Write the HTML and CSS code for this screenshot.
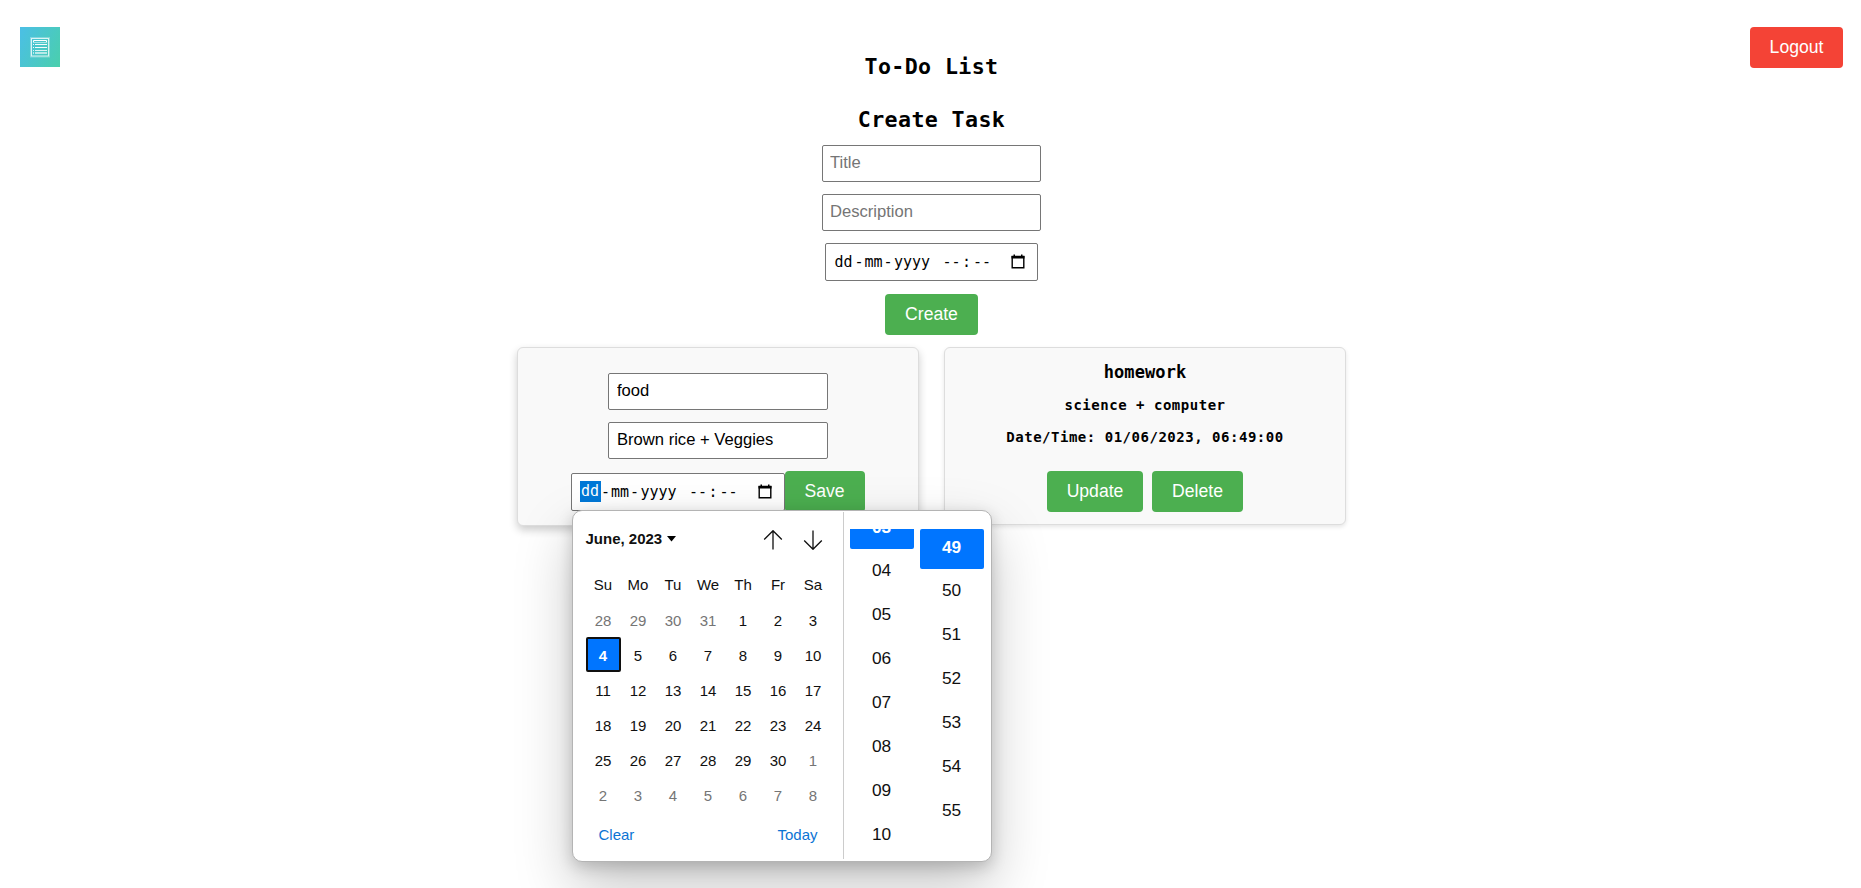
FILE: index.html
```html
<!DOCTYPE html>
<html lang="en">
<head>
<meta charset="utf-8">
<title>To-Do List</title>
<link rel="stylesheet" href="styles.css">
</head>
<body>
<header class="topbar">
  <div class="logo">
    <svg width="40" height="40" viewBox="0 0 40 40" fill="none">
      <rect x="11.5" y="11.5" width="17" height="17.5" stroke="#fff" stroke-opacity=".8"/>
      <rect x="10.5" y="10.5" width="19" height="19.5" stroke="#fff" stroke-opacity=".3"/>
      <path d="M13.5 15.5V13.5H26.5V15.5" stroke="#fff"/>
      <path d="M14 15.5H26" stroke="#fff" stroke-opacity=".5"/>
      <path d="M13 17.5H14M15 17.5H27M13 20.5H14M15 20.5H27" stroke="#fff" stroke-opacity=".95"/>
      <path d="M13 23.5H14M15 23.5H27" stroke="#fff" stroke-opacity=".8"/>
      <path d="M13 26H14M15 26H27" stroke="#fff" stroke-opacity=".6" stroke-width="2"/>
    </svg>
  </div>
  <button class="btn btn-logout">Logout</button>
</header>
<main class="page">
  <h2 class="heading">To-Do List</h2>
  <h2 class="heading">Create Task</h2>
  <form class="create">
    <input class="field" type="text" placeholder="Title">
    <input class="field" type="text" placeholder="Description">
    <div class="datetime">
      <span class="dd">dd</span><span class="sep">-</span><span class="mm">mm</span><span class="sep">-</span><span class="yyyy">yyyy</span><span class="hh">--</span><span class="colon">:</span><span class="mi">--</span>
      <svg class="cal-icon" width="14" height="15" viewBox="0 0 14 15"><path d="M1.200 2.500h11.600v11.300H1.200z" fill="none" stroke="#000" stroke-width="1.400"/><path d="M.5 2h13v2.500H.5zM2.500.4H4V3H2.500zM10 .4h1.500V3H10z"/></svg>
    </div>
    <button class="btn btn-create" type="button">Create</button>
  </form>
  <section class="tasks">
    <article class="card card-edit">
      <input class="field" type="text" value="food">
      <input class="field" type="text" value="Brown rice + Veggies">
      <div class="edit-row">
        <div class="datetime">
          <span class="dd selected">dd</span><span class="sep">-</span><span class="mm">mm</span><span class="sep">-</span><span class="yyyy">yyyy</span><span class="hh">--</span><span class="colon">:</span><span class="mi">--</span>
          <svg class="cal-icon" width="14" height="15" viewBox="0 0 14 15"><path d="M1.200 2.500h11.600v11.300H1.200z" fill="none" stroke="#000" stroke-width="1.400"/><path d="M.5 2h13v2.500H.5zM2.500.4H4V3H2.500zM10 .4h1.500V3H10z"/></svg>
        </div>
        <button class="btn btn-save">Save</button>
        <div class="picker">
          <div class="calendar">
            <div class="cal-head">
              <span class="month">June, 2023</span>
              <svg class="caret" width="9" height="6" viewBox="0 0 9 6"><path d="M0 0h9L4.500 5.500z"/></svg>
              <svg class="arrow" width="20" height="20" viewBox="0 0 20 20"><path d="M10 19.500V1M1.200 9.500L10 .7l8.800 8.800"/></svg>
              <svg class="arrow" width="20" height="20" viewBox="0 0 20 20"><path d="M10 .5V19M1.200 10.500L10 19.300l8.800-8.800"/></svg>
            </div>
            <div class="weekdays"><span>Su</span><span>Mo</span><span>Tu</span><span>We</span><span>Th</span><span>Fr</span><span>Sa</span></div>
            <div class="days">
              <span class="off">28</span><span class="off">29</span><span class="off">30</span><span class="off">31</span><span>1</span><span>2</span><span>3</span>
              <span class="today">4</span><span>5</span><span>6</span><span>7</span><span>8</span><span>9</span><span>10</span>
              <span>11</span><span>12</span><span>13</span><span>14</span><span>15</span><span>16</span><span>17</span>
              <span>18</span><span>19</span><span>20</span><span>21</span><span>22</span><span>23</span><span>24</span>
              <span>25</span><span>26</span><span>27</span><span>28</span><span>29</span><span>30</span><span class="off">1</span>
              <span class="off">2</span><span class="off">3</span><span class="off">4</span><span class="off">5</span><span class="off">6</span><span class="off">7</span><span class="off">8</span>
            </div>
            <div class="cal-foot"><span>Clear</span><span>Today</span></div>
          </div>
          <div class="times">
            <div class="column hours"><span class="chosen">03</span><span>04</span><span>05</span><span>06</span><span>07</span><span>08</span><span>09</span><span>10</span></div>
            <div class="column"><span class="chosen">49</span><span>50</span><span>51</span><span>52</span><span>53</span><span>54</span><span>55</span></div>
          </div>
        </div>
      </div>
    </article>
    <article class="card card-view">
      <h3 class="task-title">homework</h3>
      <p class="task-text">science + computer</p>
      <p class="task-text">Date/Time: 01/06/2023, 06:49:00</p>
      <div class="actions"><button class="btn btn-update">Update</button><button class="btn btn-delete">Delete</button></div>
    </article>
  </section>
</main>
</body>
</html>
```
FILE: styles.css
```css
* { box-sizing: border-box; }
html, body { height: 100%; overflow: hidden; }
body { margin: 0; background: #fff; color: #000; font-family: Consolas, "DejaVu Sans Mono", monospace; }
.topbar { display: flex; justify-content: space-between; height: 48px; padding: 27px 18px 0 20px; }
.logo { width: 40px; height: 40px; flex: none; background: linear-gradient(115deg, #4bbfe6, #4acfac); }
.logo svg { display: block; }
.btn { display: block; flex: none; height: 41px; padding: 0 0 1px; border: 0; border-radius: 4px; background: #4caf50; color: #fff; font: 17.6px "Liberation Sans", Arial, sans-serif; }
.btn-logout { width: 93px; background: #f44336; }
.btn-create { width: 93px; }
.btn-save { width: 80px; }
.btn-update { width: 96px; }
.btn-delete { width: 91px; }
.page { display: flex; flex-direction: column; align-items: center; padding-left: 2px; }
.heading { margin: 0 0 25px; height: 28px; line-height: 28px; padding-top: 5px; font-size: 21.6px; letter-spacing: .4px; white-space: nowrap; }
.heading + .heading { margin-bottom: 16px; }
.create { display: flex; flex-direction: column; align-items: center; gap: 12px; }
.field { display: block; width: 219px; height: 37px; margin: 0; padding: 0 8px 2px 7px; border: 1px solid #767676; border-radius: 2px; background: #fff; color: #000; font: 16.6px "Liberation Sans", Arial, sans-serif; }
.field::placeholder { color: #757575; }
.datetime { display: flex; align-items: center; flex: none; width: 213px; height: 38px; padding-left: 7px; border: 1px solid #767676; border-radius: 2px; background: #fff; font-size: 15px; line-height: 21px; text-align: center; }
.create .btn { margin-top: 1px; }
.dd { width: 21px; }
.selected { margin-bottom: 1px; background: #0078d7; color: #fff; }
.sep { width: 10px; }
.mm { width: 19px; }
.yyyy { width: 38px; }
.hh { width: 19px; margin-left: 11px; }
.colon { width: 11px; }
.mi { width: 20px; }
.cal-icon { margin: 0 0 1px 19px; }
.edit-row .datetime { padding-left: 8px; }
.tasks { display: flex; align-items: flex-start; gap: 25px; margin: 12px 0 0; }
.card { width: 402px; border: 1px solid #ddd; border-radius: 6px; background: #f9f9f9; display: flex; flex-direction: column; align-items: center; }
.card-edit { height: 179px; padding-top: 25px; gap: 12px; box-shadow: 0 4px 8px rgba(0,0,0,.2); }
.card-edit .field { width: 220px; padding-left: 8px; }
.edit-row { position: relative; display: flex; align-items: flex-end; width: 294px; margin-right: 1px; }
.edit-row .datetime { width: 214px; margin-bottom: 1px; }
.card-view { height: 178px; padding-top: 12px; box-shadow: 0 2px 4px rgba(0,0,0,.1); }
.task-title { margin: 0 0 11px; font-size: 17px; line-height: 24px; letter-spacing: .1px; }
.task-text { margin: 0 0 12px; font-size: 14px; font-weight: bold; line-height: 20px; letter-spacing: .52px; white-space: nowrap; }
.actions { display: flex; gap: 9px; margin-top: 12px; }
.picker { position: absolute; z-index: 2; left: 1px; top: 39px; display: flex; width: 420px; height: 352px; border: 1px solid #b4b4b4; border-radius: 10px; background: #fff; box-shadow: 0 25.6px 57.6px rgba(0,0,0,.22), 0 4.8px 14.4px rgba(0,0,0,.18); font-family: "Liberation Sans", Arial, sans-serif; color: #101010; }
.calendar { width: 271px; height: 347px; margin-top: 1px; padding-left: 13px; border-right: 1px solid #ccc; }
.cal-head { display: flex; align-items: center; height: 55px; padding-right: 20px; }
.month { margin-bottom: 2px; font-size: 15px; font-weight: bold; }
.caret { margin: 0 auto 1px 5px; }
.arrow { fill: none; stroke: #101010; stroke-width: 1.300; }
.arrow + .arrow { margin-left: 20px; }
.weekdays, .days { display: grid; grid-template-columns: repeat(7, 35px); font-size: 15px; text-align: center; }
.weekdays { line-height: 35px; height: 35px; }
.days { grid-auto-rows: 35px; line-height: 37px; }
.off { color: #757575; }
.today { border: 2px solid #101010; border-radius: 2px; background: #0075ff; color: #fff; font-weight: bold; line-height: 33px; }
.cal-foot { display: flex; justify-content: space-between; padding: 14px 25px 0 13px; font-size: 15px; line-height: 17px; color: #0b74d4; }
.times { display: flex; gap: 6px; height: 330px; margin: 18px 0 0 6px; overflow: hidden; }
.column { display: flex; flex-direction: column; gap: 4px; width: 64px; font-size: 17.3px; line-height: 35px; text-align: center; }
.column span { flex: none; height: 40px; }
.hours { margin-top: -20px; }
.chosen { border-radius: 2px; background: #0075ff; color: #fff; font-weight: bold; line-height: 36px; }
```
